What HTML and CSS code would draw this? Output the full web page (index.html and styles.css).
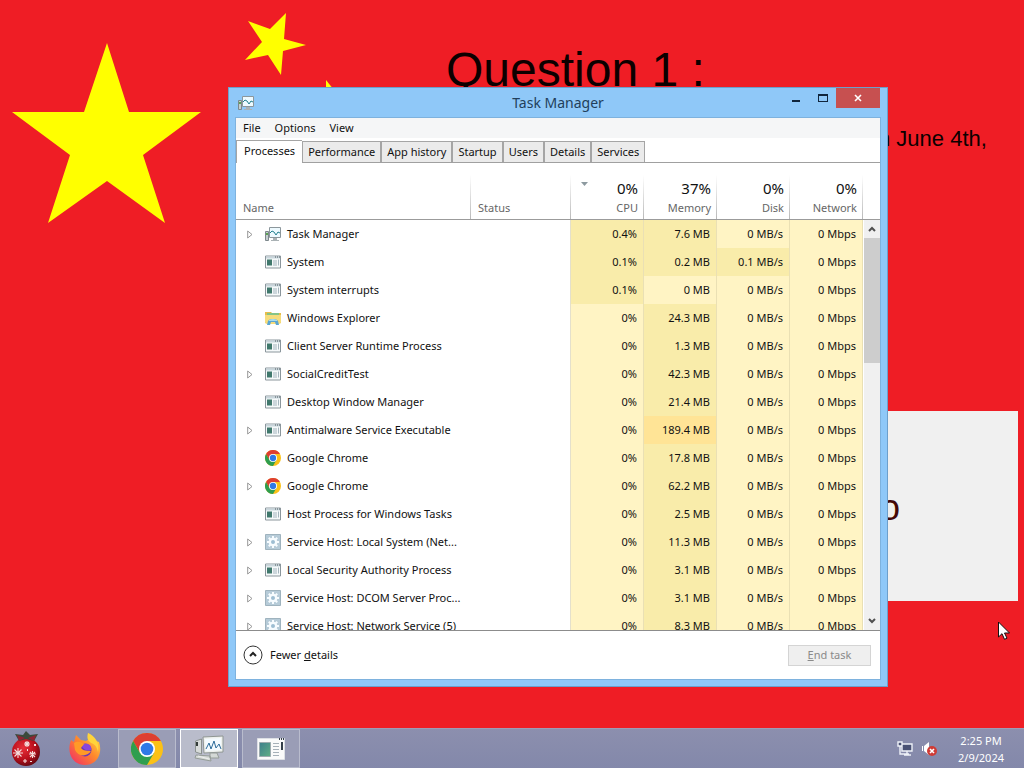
FILE: index.html
```html
<!DOCTYPE html>
<html lang="en">
<head>
<meta charset="utf-8">
<title>Task Manager</title>
<link rel="stylesheet" href="styles.css">
</head>
<body>
<svg class="defs" aria-hidden="true">
  <defs>
    <linearGradient id="fox" x1="1" y1="0" x2="0" y2="1"><stop offset="0" stop-color="#ffe34a"/><stop offset=".45" stop-color="#ff8a2b"/><stop offset="1" stop-color="#f0246b"/></linearGradient>
    <radialGradient id="bauble" cx=".4" cy=".35" r=".7"><stop offset="0" stop-color="#e8303a"/><stop offset=".6" stop-color="#b80f1c"/><stop offset="1" stop-color="#5c0710"/></radialGradient>
    <linearGradient id="teal" x1="0" y1="0" x2="1" y2="1"><stop offset="0" stop-color="#3d7f8c"/><stop offset="1" stop-color="#5fae84"/></linearGradient>
  </defs>
  <symbol id="i-app" viewBox="0 0 16 13">
    <path fill="#f6f9fa" stroke="#8b969c" d="M.5.5h15v12H.5z"/>
    <path fill="#c9d6dc" d="M1 1h14v2H1z"/>
    <path fill="#4b575c" d="M10 1h1v1h-1zM12 1h1v1h-1zM14 1h1v1h-1z"/>
    <path fill="#40786c" d="M2 4h5v6H2z"/>
    <path fill="#a4b5bd" d="M8 5h4v1H8zM8 7h4v1H8zM8 9h4v1H8zM13 4h1v6h-1z"/>
  </symbol>
  <symbol id="i-taskmgr" viewBox="0 0 16 14">
    <path fill="#c6cdd0" stroke="#7d888c" d="M.5 4.5h3v9h-3z"/>
    <path fill="#5ba352" d="M1 6h2v2H1z"/>
    <path fill="#eefaff" stroke="#8c979c" d="M4.500.500h11v10h-11z"/>
    <path fill="none" stroke="#22808f" d="M5 6l2-2 2 1 2 3 2-3 2 1"/>
    <path fill="#aab2b5" d="M8 11h4v2H8zM6 13h8v1H6z"/>
  </symbol>
  <symbol id="i-explorer" viewBox="0 0 16 16">
    <path fill="#e6bd4b" d="M0 2h6l1 1h9v10H0z"/>
    <path fill="#86c486" d="M2 3h12v2H2z"/>
    <path fill="#f6dc7c" d="M0 5h16v7q0 2-2 2H2q-2 0-2-2z"/>
    <path fill="#5ba6d2" d="M2 15l1-4q1-2 5-2t5 2l1 4h-3l-1-3H6l-1 3z"/>
    <path fill="#a9dced" d="M4 10q4-2 8 0v1H4z"/>
  </symbol>
  <symbol id="i-chrome" viewBox="0 0 32 32">
    <circle cx="16" cy="16" r="16" fill="#fbc116"/>
    <path fill="#de3f31" d="M2.140 8A16 16 0 0 1 29.860 8H16l-6.930 12z"/>
    <path fill="#2f9e4f" d="M2.140 8A16 16 0 0 0 16 32l6.930-12H9.070z"/>
    <circle cx="16" cy="16" r="8" fill="#fff"/>
    <circle cx="16" cy="16" r="6.300" fill="#2f79e6"/>
  </symbol>
  <symbol id="i-gear" viewBox="0 0 16 16">
    <path fill="#b6cbd8" stroke="#9fb3be" d="M.5.500h15v15H.5z"/>
    <g fill="#f7fcff"><circle cx="8" cy="8" r="4.300"/>
    <path d="M7 2h2v12H7zM2 7h12v2H2zM3.050 4.460l1.410-1.410 8.490 8.490-1.410 1.410zM11.540 3.050l1.410 1.410-8.490 8.490-1.410-1.410z"/></g>
    <circle cx="8" cy="8" r="2" fill="#9dbdd2"/>
  </symbol>
  <symbol id="i-arrow" viewBox="0 0 6 9"><path fill="#fff" stroke="#989898" d="M.7 1v7L5 4.500z"/></symbol>
</svg>

<main class="desktop">
  <svg class="stars" viewBox="0 0 340 230" aria-hidden="true">
    <path fill="#ff0" d="M107 43l22 69h72l-58 43 22 68-58-42-59 42 22-68-58-43h72z"/>
    <path fill="#ff0" d="M286 13l-2 26 22 6-23 6-2 24-13-20-23 5 17-18-14-21 22 8z"/>
    <path fill="#ff0" d="M326 80l8 10-4 20-4-8z"/>
  </svg>
  <h1 class="question">Question 1 :</h1>
  <p class="prompt">n June 4th,</p>
  <button class="answer" type="button">o</button>

  <section class="window" aria-label="Task Manager">
    <header class="titlebar">
      <svg class="title-icon"><use href="#i-taskmgr"/></svg>
      <h2 class="title">Task Manager</h2>
      <div class="controls">
        <button class="control" type="button" aria-label="Minimize"><svg width="10" height="10"><path fill="#10253c" d="M1 7h8v2H1z"/></svg></button>
        <button class="control" type="button" aria-label="Maximize"><svg width="10" height="9"><path fill="#10253c" fill-rule="evenodd" d="M0 0h10v8H0zM1 2h8v5H1z"/></svg></button>
        <button class="control close" type="button" aria-label="Close"><svg width="8" height="8"><path stroke="#fff" stroke-width="1.600" d="M1 1l6 6M7 1L1 7"/></svg></button>
      </div>
    </header>
    <div class="client">
      <nav class="menubar"><button type="button">File</button><button type="button">Options</button><button type="button">View</button></nav>
      <div class="tabs" role="tablist">
        <button class="tab active" role="tab" aria-selected="true">Processes</button><button class="tab" role="tab">Performance</button><button class="tab" role="tab">App history</button><button class="tab" role="tab">Startup</button><button class="tab" role="tab">Users</button><button class="tab" role="tab">Details</button><button class="tab" role="tab">Services</button>
      </div>
      <div class="list">
        <div class="viewport">
          <table class="processes">
            <colgroup><col class="c-name"><col class="c-status"><col class="c-num"><col class="c-num"><col class="c-num"><col class="c-num"></colgroup>
            <thead>
              <tr><th class="left">Name</th><th class="left">Status</th><th><svg class="sort" viewBox="0 0 7 4"><path fill="#8d9aa0" d="M0 0h7L3.500 4z"/></svg><b>0%</b>CPU</th><th><b>37%</b>Memory</th><th><b>0%</b>Disk</th><th><b>0%</b>Network</th></tr>
            </thead>
            <tbody>
              <tr><td><div class="name"><svg class="arrow"><use href="#i-arrow"/></svg><svg class="icon"><use href="#i-taskmgr"/></svg><span>Task Manager</span></div></td><td></td><td class="mid">0.4%</td><td class="mid">7.6 MB</td><td>0 MB/s</td><td>0 Mbps</td></tr>
              <tr><td><div class="name"><i class="arrow"></i><svg class="icon"><use href="#i-app"/></svg><span>System</span></div></td><td></td><td class="mid">0.1%</td><td class="mid">0.2 MB</td><td class="mid">0.1 MB/s</td><td>0 Mbps</td></tr>
              <tr><td><div class="name"><i class="arrow"></i><svg class="icon"><use href="#i-app"/></svg><span>System interrupts</span></div></td><td></td><td class="mid">0.1%</td><td>0 MB</td><td>0 MB/s</td><td>0 Mbps</td></tr>
              <tr><td><div class="name"><i class="arrow"></i><svg class="icon"><use href="#i-explorer"/></svg><span>Windows Explorer</span></div></td><td></td><td>0%</td><td class="mid">24.3 MB</td><td>0 MB/s</td><td>0 Mbps</td></tr>
              <tr><td><div class="name"><i class="arrow"></i><svg class="icon"><use href="#i-app"/></svg><span>Client Server Runtime Process</span></div></td><td></td><td>0%</td><td class="mid">1.3 MB</td><td>0 MB/s</td><td>0 Mbps</td></tr>
              <tr><td><div class="name"><svg class="arrow"><use href="#i-arrow"/></svg><svg class="icon"><use href="#i-app"/></svg><span>SocialCreditTest</span></div></td><td></td><td>0%</td><td class="mid">42.3 MB</td><td>0 MB/s</td><td>0 Mbps</td></tr>
              <tr><td><div class="name"><i class="arrow"></i><svg class="icon"><use href="#i-app"/></svg><span>Desktop Window Manager</span></div></td><td></td><td>0%</td><td class="mid">21.4 MB</td><td>0 MB/s</td><td>0 Mbps</td></tr>
              <tr><td><div class="name"><svg class="arrow"><use href="#i-arrow"/></svg><svg class="icon"><use href="#i-app"/></svg><span>Antimalware Service Executable</span></div></td><td></td><td>0%</td><td class="high">189.4 MB</td><td>0 MB/s</td><td>0 Mbps</td></tr>
              <tr><td><div class="name"><i class="arrow"></i><svg class="icon"><use href="#i-chrome"/></svg><span>Google Chrome</span></div></td><td></td><td>0%</td><td class="mid">17.8 MB</td><td>0 MB/s</td><td>0 Mbps</td></tr>
              <tr><td><div class="name"><svg class="arrow"><use href="#i-arrow"/></svg><svg class="icon"><use href="#i-chrome"/></svg><span>Google Chrome</span></div></td><td></td><td>0%</td><td class="mid">62.2 MB</td><td>0 MB/s</td><td>0 Mbps</td></tr>
              <tr><td><div class="name"><i class="arrow"></i><svg class="icon"><use href="#i-app"/></svg><span>Host Process for Windows Tasks</span></div></td><td></td><td>0%</td><td class="mid">2.5 MB</td><td>0 MB/s</td><td>0 Mbps</td></tr>
              <tr><td><div class="name"><svg class="arrow"><use href="#i-arrow"/></svg><svg class="icon"><use href="#i-gear"/></svg><span>Service Host: Local System (Net...</span></div></td><td></td><td>0%</td><td class="mid">11.3 MB</td><td>0 MB/s</td><td>0 Mbps</td></tr>
              <tr><td><div class="name"><svg class="arrow"><use href="#i-arrow"/></svg><svg class="icon"><use href="#i-app"/></svg><span>Local Security Authority Process</span></div></td><td></td><td>0%</td><td class="mid">3.1 MB</td><td>0 MB/s</td><td>0 Mbps</td></tr>
              <tr><td><div class="name"><svg class="arrow"><use href="#i-arrow"/></svg><svg class="icon"><use href="#i-gear"/></svg><span>Service Host: DCOM Server Proc...</span></div></td><td></td><td>0%</td><td class="mid">3.1 MB</td><td>0 MB/s</td><td>0 Mbps</td></tr>
              <tr><td><div class="name"><svg class="arrow"><use href="#i-arrow"/></svg><svg class="icon"><use href="#i-gear"/></svg><span>Service Host: Network Service (5)</span></div></td><td></td><td>0%</td><td class="mid">8.3 MB</td><td>0 MB/s</td><td>0 Mbps</td></tr>
            </tbody>
          </table>
        </div>
        <div class="side">
          <div class="side-head"></div>
          <div class="scrollbar">
            <button class="step" type="button" aria-label="Scroll up"><svg width="8" height="6"><path fill="none" stroke="#505050" stroke-width="2" d="M1 5l3-3 3 3"/></svg></button>
            <div class="thumb"></div>
            <button class="step down" type="button" aria-label="Scroll down"><svg width="8" height="6"><path fill="none" stroke="#505050" stroke-width="2" d="M1 1l3 3 3-3"/></svg></button>
          </div>
        </div>
      </div>
      <footer class="footer">
        <button class="fewer" type="button"><svg width="20" height="20"><circle cx="10" cy="10" r="9" fill="#fff" stroke="#333"/><path fill="none" stroke="#222" stroke-width="2" d="M7 11l3-3 3 3"/></svg><span>Fewer <u>d</u>etails</span></button>
        <button class="end" type="button" disabled><u>E</u>nd task</button>
      </footer>
    </div>
  </section>

  <svg class="cursor" viewBox="0 0 12 19" aria-hidden="true"><path fill="#fff" stroke="#111" d="M.5 1v15l3.500-3.300 2.500 5.600 2.500-1.100-2.500-5.200h5z"/></svg>
</main>

<footer class="taskbar">
  <div class="apps">
    <button class="app" type="button" aria-label="Ornament"><svg width="32" height="36" viewBox="0 0 32 36"><circle cx="16" cy="21" r="14" fill="url(#bauble)"/><path fill="#3b4a3c" d="M5 3l8 1 3-4 4 4 8-1-4 7-8-2-7 2z"/><path fill="#8e2534" d="M7 4l8 3-6 3zM26 4l-8 3 6 3z"/><g stroke="#f4dedd" stroke-width="1.100"><path d="M3 22h10M8 17v10M4.500 18.500l7 7M11.500 18.500l-7 7M14 13h6M17 10v6M15 11l4 4M19 11l-4 4M19 23h7M22.500 20v7M20 21l5 5M25 21l-5 5M13 30h4M15 28v4"/></g><path fill="#f3e3e0" d="M24 13h2v2h-2zM17 18h1v2h-1zM20 30h2v1h-2z"/></svg></button>
    <button class="app" type="button" aria-label="Firefox"><svg width="32" height="32" viewBox="0 0 32 32"><path fill="url(#fox)" d="M2 7l3 2 2-7 5 5 5 1 3-2-1-6 8 8 3 1c4 11-2 23-14 23C4 32-3 20 2 7z"/><path fill="#ffd43b" d="M19 0c7 3 12 10 10 19-1-5-3-8-7-9-4-3-4-6-3-10z"/><circle cx="16" cy="17" r="6.500" fill="#6a36b9"/><path fill="#ff9a27" d="M5 10c4-3 8 0 12 1-2 1-4 2-5 4 3 4 6 2 10 3-4 6-13 6-16-1z"/><path fill="#8a46db" d="M15 11c5-1 8 2 7 6-2 0-5 1-7-1l-2-2z"/></svg></button>
    <button class="app open" type="button" aria-label="Google Chrome"><svg width="32" height="32"><use href="#i-chrome"/></svg></button>
    <button class="app open current" type="button" aria-label="Task Manager"><svg width="32" height="28" viewBox="0 0 32 28"><path fill="#d7dbd9" stroke="#8a918f" d="M2.500 6l6-2v15l-6-2z"/><path fill="#333b38" d="M3 7h2v4H3z"/><path fill="#eef1ee" stroke="#8f9693" d="M10 2l20-1v16l-19 1z"/><path fill="#f4fbff" d="M12 4l16-1v12l-15 1z"/><path fill="none" stroke="#2b6b9a" d="M13 14l3-6 2 6 3-8 2 7 3-4 2 5"/><path fill="#d4d9d6" stroke="#959c98" d="M17 18h7l2 5h-9zM3 20l14 1 1 5-16-3z"/><path fill="none" stroke="#eee" d="M5 21l11 3"/></svg></button>
    <button class="app open" type="button" aria-label="SocialCreditTest"><svg width="28" height="24" viewBox="0 0 28 24"><path fill="#fafafa" stroke="#dde0e5" d="M.5 1.500h27v21H.5z"/><path fill="url(#teal)" stroke="#9cabae" d="M2.500 5.500h11v14h-11z"/><path stroke="#a6b0b8" d="M16 6.500h6M16 9.500h6M16 12.500h6M16 15.500h6M16 18.500h6"/><path fill="#333e48" d="M22 1h1v2h-1zM24 1h1v2h-1zM26 1h1v2h-1zM24 5h2v8h-2z"/></svg></button>
  </div>
  <div class="tray">
    <svg width="16" height="16" aria-label="Network"><path fill="#4a5275" stroke="#eef1f8" stroke-width="1.400" d="M5 3h10v7H5zM1 1h4v4H1z"/><path fill="none" stroke="#eef1f8" stroke-width="1.400" d="M3 5v8h9M10 10v4M7 14h7"/></svg>
    <svg width="17" height="16" aria-label="Muted"><path fill="#fff" d="M3 5l5-4v13l-5-4zM1 5h1v5H1z"/><circle cx="11" cy="10" r="5" fill="#cf3b35"/><path stroke="#fff" stroke-width="1.600" d="M9 8l4 4M13 8l-4 4"/></svg>
    <div class="clock"><time>2:25 PM</time><time>2/9/2024</time></div>
  </div>
</footer>
</body>
</html>
```
FILE: styles.css
```css
* { box-sizing: border-box; }

body {
  margin: 0;
  min-height: 100vh;
  display: flex;
  flex-direction: column;
  background: #ef1d25;
  color: #111;
  font: 11px/16px "Noto Sans", "Open Sans", sans-serif;
  overflow: hidden;
}

button { font: inherit; color: inherit; border: 0; padding: 0; background: none; }
.defs { position: absolute; width: 0; height: 0; }

/* Desktop canvas */
.desktop { position: relative; flex: 1; }
.stars { position: absolute; left: 0; top: 0; width: 340px; height: 230px; }
.question, .prompt { position: absolute; margin: 0; color: #0c0000; font-family: "Liberation Sans", sans-serif; font-weight: 400; white-space: nowrap; }
.question { left: 446px; top: 43px; font-size: 48px; line-height: 54px; }
.prompt { left: 878px; top: 126px; font-size: 22px; line-height: 26px; }
.answer {
  position: absolute; left: 640px; right: 6px; top: 411px; height: 190px;
  padding: 4px 0 0 240px; text-align: left;
  background: #f0f0f0; color: #430808;
  font: 36px/40px "Liberation Sans", sans-serif;
}
.cursor { position: absolute; left: 998px; top: 621px; width: 12px; height: 19px; }

/* Window frame */
.window {
  position: absolute; left: 228px; top: 87px; width: 660px; height: 600px;
  display: flex; flex-direction: column;
  padding: 0 7px 7px;
  background: #8fc8f8;
  border: 1px solid #6d9fcb;
}
.titlebar { display: grid; grid-template-columns: 104px 1fr 104px; height: 30px; }
.title-icon { width: 16px; height: 14px; margin: 8px 2px; }
.title { margin: 0; text-align: center; font-size: 14px; line-height: 30px; font-weight: 400; color: #223f5c; }
.controls { display: flex; justify-content: flex-end; align-items: flex-start; }
.control { width: 27px; height: 20px; display: grid; place-items: center; }
.close { width: 44px; background: #c75050; }

.client { flex: 1; min-height: 0; display: flex; flex-direction: column; background: #fff; box-shadow: 0 0 0 1px #7eb2de; }
.menubar { display: flex; gap: 14px; padding: 0 7px; height: 20px; background: #f5f6f7; }

/* Tabs */
.tabs { display: flex; align-items: flex-end; height: 25px; border-bottom: 1px solid #a0a0a0; }
.tab { height: 21px; padding: 0 5px; border: 1px solid #a5a5a5; border-bottom: 0; background: #ebebeb; white-space: nowrap; }
.tab.active { height: 23px; padding: 0 7px 2px; margin-bottom: -1px; background: #fff; border-right: 0; }

/* Process list */
.list { flex: 1; min-height: 0; display: flex; border-bottom: 1px solid #8c8c8c; }
.viewport { flex: 1; min-width: 0; overflow: hidden; }
.processes { width: 100%; table-layout: fixed; border-collapse: separate; border-spacing: 0; }
.c-status { width: 100px; }
.c-num { width: 73px; }
.processes th {
  position: relative; height: 57px; padding: 0 6px 3px 0; vertical-align: bottom; text-align: right;
  color: #666; font-weight: 400; border-bottom: 1px solid #9b9b9b;
  background: linear-gradient(#fff, #b9b9b9) right bottom / 1px 44px no-repeat;
}
.processes th b { display: block; color: #111; font-size: 15px; line-height: 24px; font-weight: 400; }
.processes th.left { text-align: left; padding-left: 7px; }
.sort { position: absolute; left: 10px; top: 19px; width: 7px; height: 4px; }
.processes td {
  height: 28px; padding: 0 6px 0 0; text-align: right; white-space: nowrap;
  background: #fff4c4; border-right: 1px solid #eae0b4;
}
.processes td:nth-child(-n+2) { background: #fff; border-right: 0; }
.processes td:nth-child(2) { border-right: 1px solid #e4e0cc; }
.processes td.mid { background: #f9ecaa; }
.processes td.high { background: #ffe496; }
.name { display: flex; align-items: center; padding-left: 11px; }
.arrow { width: 6px; height: 9px; margin-right: 12px; flex: none; }
.icon { width: 16px; height: 16px; margin-right: 6px; flex: none; }

/* Scrollbar */
.side { width: 17px; display: flex; flex-direction: column; }
.side-head { height: 57px; border-bottom: 1px solid #9b9b9b; }
.scrollbar { flex: 1; display: flex; flex-direction: column; background: #f0f0f0; margin-left: 1px; }
.step { height: 18px; display: grid; place-items: center; }
.down { margin-top: auto; }
.thumb { height: 125px; background: #cdcdcd; }

.footer { height: 48px; display: flex; align-items: center; justify-content: space-between; padding: 0 9px 0 7px; }
.fewer { display: flex; align-items: center; gap: 7px; }
.end { width: 83px; height: 21px; border: 1px solid #d4d4d4; background: #efefef; color: #8a8a8a; }

/* Taskbar */
.taskbar { height: 40px; display: flex; justify-content: space-between; background: linear-gradient(#8c8fae, #8388aa); border-top: 1px solid #a09bb5; }
.apps { display: flex; gap: 4px; }
.app { width: 58px; height: 39px; display: grid; place-items: center; }
.app:first-child { width: 52px; }
.app.open { background: #9a9db6; border: 1px solid #b9bccd; }
.app.current { background: #b9bccb; border-color: #fff; }
.tray { display: flex; align-items: center; gap: 8px; padding-right: 20px; color: #fff; }
.clock { display: flex; flex-direction: column; text-align: center; margin-left: 12px; line-height: 17px; }
```
